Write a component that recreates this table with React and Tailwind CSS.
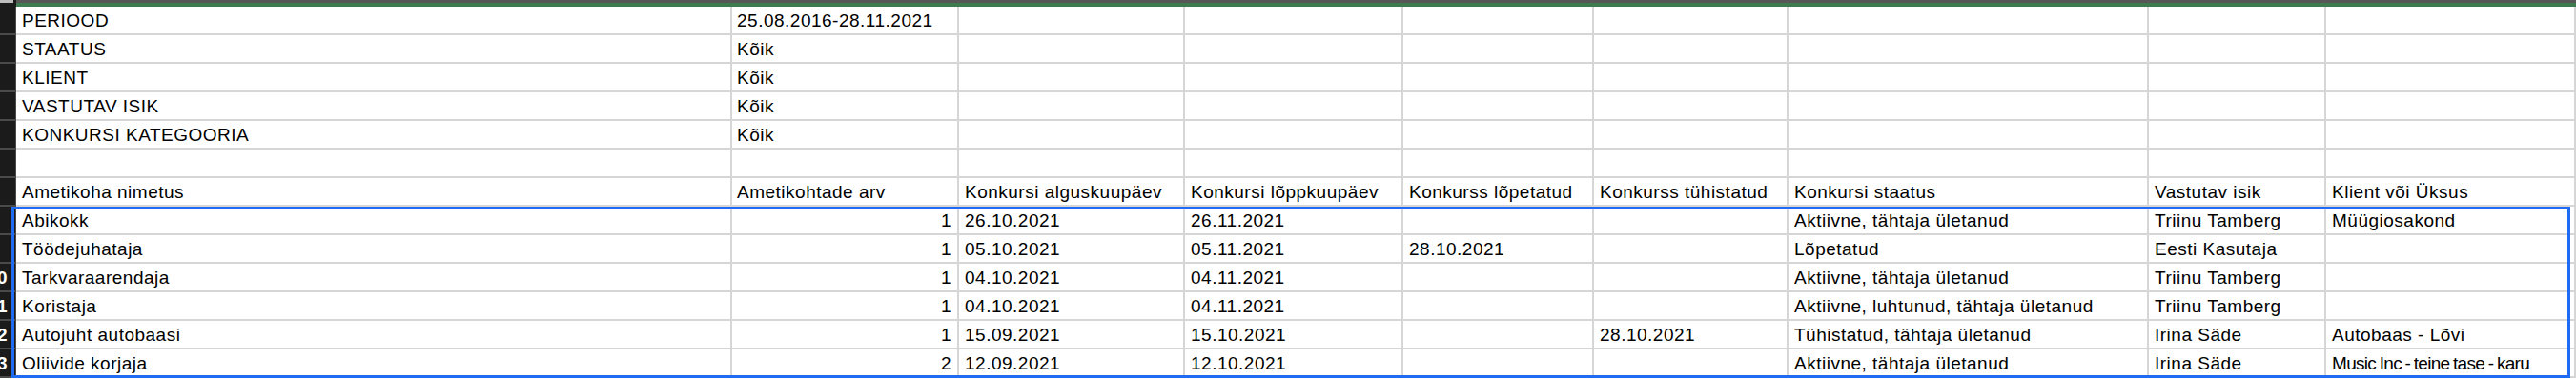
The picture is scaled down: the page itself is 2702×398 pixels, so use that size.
const COLS = [
  'w-[751px] pl-[6px]',
  'w-[238px] pl-[5px]',
  'w-[237px] pl-[6px]',
  'w-[229px] pl-[6px]',
  'w-[200px] pl-[6px]',
  'w-[204px] pl-[6px]',
  'w-[378px] pl-[6px]',
  'w-[186px] pl-[6px]',
  'w-[262px] pl-[6px]',
];

const meta = [
  ['PERIOOD', '25.08.2016-28.11.2021'],
  ['STAATUS', 'Kõik'],
  ['KLIENT', 'Kõik'],
  ['VASTUTAV ISIK', 'Kõik'],
  ['KONKURSI KATEGOORIA', 'Kõik'],
  ['', ''],
];

const header = [
  'Ametikoha nimetus',
  'Ametikohtade arv',
  'Konkursi alguskuupäev',
  'Konkursi lõppkuupäev',
  'Konkurss lõpetatud',
  'Konkurss tühistatud',
  'Konkursi staatus',
  'Vastutav isik',
  'Klient või Üksus',
];

const rows = [
  ['Abikokk', '1', '26.10.2021', '26.11.2021', '', '', 'Aktiivne, tähtaja ületanud', 'Triinu Tamberg', 'Müügiosakond'],
  ['Töödejuhataja', '1', '05.10.2021', '05.11.2021', '28.10.2021', '', 'Lõpetatud', 'Eesti Kasutaja', ''],
  ['Tarkvaraarendaja', '1', '04.10.2021', '04.11.2021', '', '', 'Aktiivne, tähtaja ületanud', 'Triinu Tamberg', ''],
  ['Koristaja', '1', '04.10.2021', '04.11.2021', '', '', 'Aktiivne, luhtunud, tähtaja ületanud', 'Triinu Tamberg', ''],
  ['Autojuht autobaasi', '1', '15.09.2021', '15.10.2021', '', '28.10.2021', 'Tühistatud, tähtaja ületanud', 'Irina Säde', 'Autobaas - Lõvi'],
  ['Oliivide korjaja', '2', '12.09.2021', '12.10.2021', '', '', 'Aktiivne, tähtaja ületanud', 'Irina Säde', 'Music Inc - teine tase - karu'],
];

function RowHead({ num }) {
  return (
    <div className="w-[17px] shrink-0 h-full bg-[#1b1b1b] border-r border-b-2 border-[#4a4a4a] overflow-hidden relative">
      {num && (
        <div className="absolute right-[8px] top-0 h-full flex items-center text-white font-semibold leading-none">
          {num}
        </div>
      )}
    </div>
  );
}

function Row({ cells, num, numeric }) {
  return (
    <div className="flex h-[30px]">
      <RowHead num={num} />
      {COLS.map((c, i) => {
        const text = cells[i] || '';
        // long client names squeeze a bit, like the narrow spreadsheet font
        const tight = text.length > 24 && i === 8 ? 'tracking-[-0.7px] [word-spacing:-1px]' : '';
        return (
          <div
            key={i}
            className={`${c} ${tight} shrink-0 h-full border-r-2 border-b-2 border-[#d6d6d6] overflow-hidden whitespace-nowrap leading-[28px] pt-[1px] ${
              numeric && i === 1 ? 'text-right pr-[6px]' : ''
            }`}
          >
            {text}
          </div>
        );
      })}
    </div>
  );
}

export default function App() {
  return (
    <div className="relative w-[2702px] h-[398px] overflow-hidden bg-white text-black font-['Liberation_Sans',Arial,sans-serif] text-[19px] tracking-[0.5px]">
      {/* column header strip (cropped) */}
      <div className="flex h-[7px]">
        <div className="w-[17px] shrink-0 bg-[#1b1b1b]">
          <div className="h-[3px] w-[14px] bg-[#bdbdbd]" />
        </div>
        <div className="flex-1 flex flex-col">
          <div className="h-[3px] bg-[#575757]" />
          <div className="h-[4px] bg-[#3e7b4f]" />
        </div>
      </div>

      {meta.map((m, i) => (
        <Row key={i} cells={m} />
      ))}
      <Row cells={header} />
      {rows.map((r, i) => (
        <Row key={i} cells={r} num={i >= 2 ? String(i + 8) : null} numeric />
      ))}

      {/* selection */}
      <div className="absolute left-[12px] top-[217px] w-[2684px] h-[180px] border-[3px] border-[#1f6cf2] pointer-events-none" />
    </div>
  );
}
